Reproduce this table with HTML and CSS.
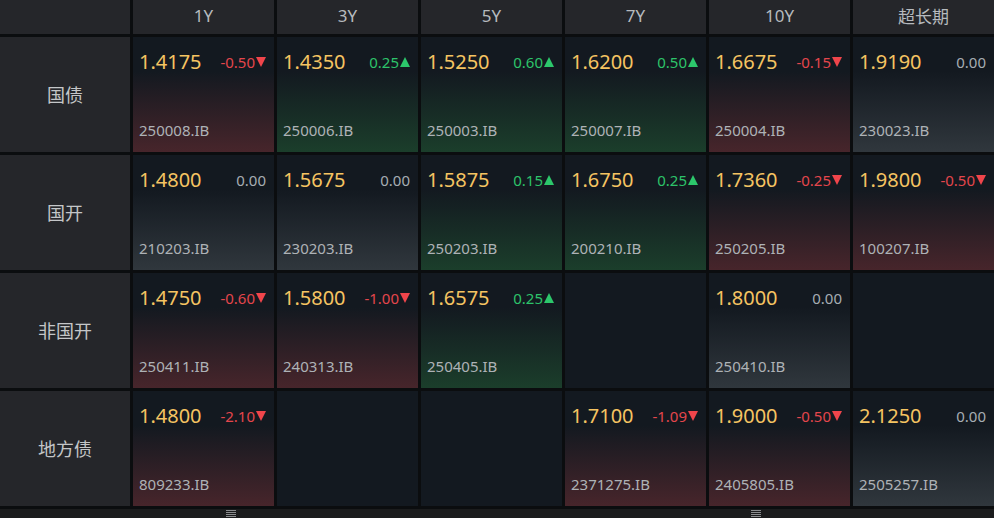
FILE: index.html
```html
<!DOCTYPE html>
<html>
  <head>
    <meta charset="utf-8">
    <title>利率债报价</title>
    <link rel="stylesheet" href="styles.css">
  </head>

  <body>
    <div class="board">
      <div class="head corner"></div>
      <div class="head">1Y</div>
      <div class="head">3Y</div>
      <div class="head">5Y</div>
      <div class="head">7Y</div>
      <div class="head">10Y</div>
      <div class="head">超长期</div>

      <!--国债-->
      <div class="label">国债</div>
      <div class="cell down">
        <div class="top"><span class="rate">1.4175</span><span class="chg down">-0.50<i class="tri down"></i></span></div>
        <div class="code">250008.IB</div>
      </div>
      <div class="cell up">
        <div class="top"><span class="rate">1.4350</span><span class="chg up">0.25<i class="tri up"></i></span></div>
        <div class="code">250006.IB</div>
      </div>
      <div class="cell up">
        <div class="top"><span class="rate">1.5250</span><span class="chg up">0.60<i class="tri up"></i></span></div>
        <div class="code">250003.IB</div>
      </div>
      <div class="cell up">
        <div class="top"><span class="rate">1.6200</span><span class="chg up">0.50<i class="tri up"></i></span></div>
        <div class="code">250007.IB</div>
      </div>
      <div class="cell down">
        <div class="top"><span class="rate">1.6675</span><span class="chg down">-0.15<i class="tri down"></i></span></div>
        <div class="code">250004.IB</div>
      </div>
      <div class="cell flat">
        <div class="top"><span class="rate">1.9190</span><span class="chg flat">0.00</span></div>
        <div class="code">230023.IB</div>
      </div>

      <!--国开-->
      <div class="label">国开</div>
      <div class="cell flat">
        <div class="top"><span class="rate">1.4800</span><span class="chg flat">0.00</span></div>
        <div class="code">210203.IB</div>
      </div>
      <div class="cell flat">
        <div class="top"><span class="rate">1.5675</span><span class="chg flat">0.00</span></div>
        <div class="code">230203.IB</div>
      </div>
      <div class="cell up">
        <div class="top"><span class="rate">1.5875</span><span class="chg up">0.15<i class="tri up"></i></span></div>
        <div class="code">250203.IB</div>
      </div>
      <div class="cell up">
        <div class="top"><span class="rate">1.6750</span><span class="chg up">0.25<i class="tri up"></i></span></div>
        <div class="code">200210.IB</div>
      </div>
      <div class="cell down">
        <div class="top"><span class="rate">1.7360</span><span class="chg down">-0.25<i class="tri down"></i></span></div>
        <div class="code">250205.IB</div>
      </div>
      <div class="cell down">
        <div class="top"><span class="rate">1.9800</span><span class="chg down">-0.50<i class="tri down"></i></span></div>
        <div class="code">100207.IB</div>
      </div>

      <!--非国开-->
      <div class="label">非国开</div>
      <div class="cell down">
        <div class="top"><span class="rate">1.4750</span><span class="chg down">-0.60<i class="tri down"></i></span></div>
        <div class="code">250411.IB</div>
      </div>
      <div class="cell down">
        <div class="top"><span class="rate">1.5800</span><span class="chg down">-1.00<i class="tri down"></i></span></div>
        <div class="code">240313.IB</div>
      </div>
      <div class="cell up">
        <div class="top"><span class="rate">1.6575</span><span class="chg up">0.25<i class="tri up"></i></span></div>
        <div class="code">250405.IB</div>
      </div>
      <div class="cell empty"></div>
      <div class="cell flat">
        <div class="top"><span class="rate">1.8000</span><span class="chg flat">0.00</span></div>
        <div class="code">250410.IB</div>
      </div>
      <div class="cell empty"></div>

      <!--地方债-->
      <div class="label">地方债</div>
      <div class="cell down">
        <div class="top"><span class="rate">1.4800</span><span class="chg down">-2.10<i class="tri down"></i></span></div>
        <div class="code">809233.IB</div>
      </div>
      <div class="cell empty"></div>
      <div class="cell empty"></div>
      <div class="cell down">
        <div class="top"><span class="rate">1.7100</span><span class="chg down">-1.09<i class="tri down"></i></span></div>
        <div class="code">2371275.IB</div>
      </div>
      <div class="cell down">
        <div class="top"><span class="rate">1.9000</span><span class="chg down">-0.50<i class="tri down"></i></span></div>
        <div class="code">2405805.IB</div>
      </div>
      <div class="cell flat">
        <div class="top"><span class="rate">2.1250</span><span class="chg flat">0.00</span></div>
        <div class="code">2505257.IB</div>
      </div>
    </div>

    <div class="splitter">
      <span class="grip"></span>
      <span class="grip"></span>
    </div>
  </body>
</html>
```

FILE: styles.css
```css
html {
  height: 100%;
}

body {
  margin: 0;
  height: 100%;
  background: #0b0d0f;
  font-family: "Noto Sans", "Noto Sans CJK SC", sans-serif;
  overflow: hidden;
}

.board {
  display: grid;
  grid-template-columns: 130px repeat(6, 1fr);
  grid-template-rows: 34px repeat(4, 115px);
  gap: 3px;
}

.head {
  display: flex;
  justify-content: center;
  align-items: center;
  background: #25262a;
  color: #b6babe;
  font-size: 17px;
  padding-bottom: 3px;
}

.label {
  display: flex;
  justify-content: center;
  align-items: center;
  background: #25262a;
  color: #c4c6c8;
  font-size: 18px;
  font-family: "Noto Sans CJK SC", sans-serif;
  padding-bottom: 2px;
}

.cell {
  display: flex;
  flex-direction: column;
  justify-content: space-between;
  padding: 11px 8px 12px 6px;
  background: #131920;
}

.cell.down {
  background: linear-gradient(to bottom, #131920 30%, #47252b 100%);
}

.cell.up {
  background: linear-gradient(to bottom, #131920 30%, #1b3e2b 100%);
}

.cell.flat {
  background: linear-gradient(to bottom, #131920 30%, #30373d 100%);
}

.top {
  display: flex;
  justify-content: space-between;
  align-items: center;
}

.rate {
  color: #f5c462;
  font-size: 20px;
}

.chg {
  display: flex;
  align-items: center;
  gap: 1px;
  font-size: 15px;
}

.chg.down {
  color: #e4464c;
}

.chg.up {
  color: #2dc36a;
}

.chg.flat {
  color: #a6adb3;
}

.tri {
  width: 0;
  height: 0;
  border-left: 5.5px solid transparent;
  border-right: 5.5px solid transparent;
}

.tri.down {
  border-top: 10px solid #f0454b;
}

.tri.up {
  border-bottom: 10px solid #2cc76b;
}

.code {
  color: #aeb2b6;
  font-size: 15px;
}

.splitter {
  display: flex;
  align-items: center;
  gap: 515px;
  margin-top: 3px;
  padding-left: 226px;
  height: 9px;
  background: #1b1c1d;
}

.grip {
  width: 10px;
  height: 7px;
  background: repeating-linear-gradient(to bottom, #8a8c8e 0 1px, transparent 1px 2px);
}
```
